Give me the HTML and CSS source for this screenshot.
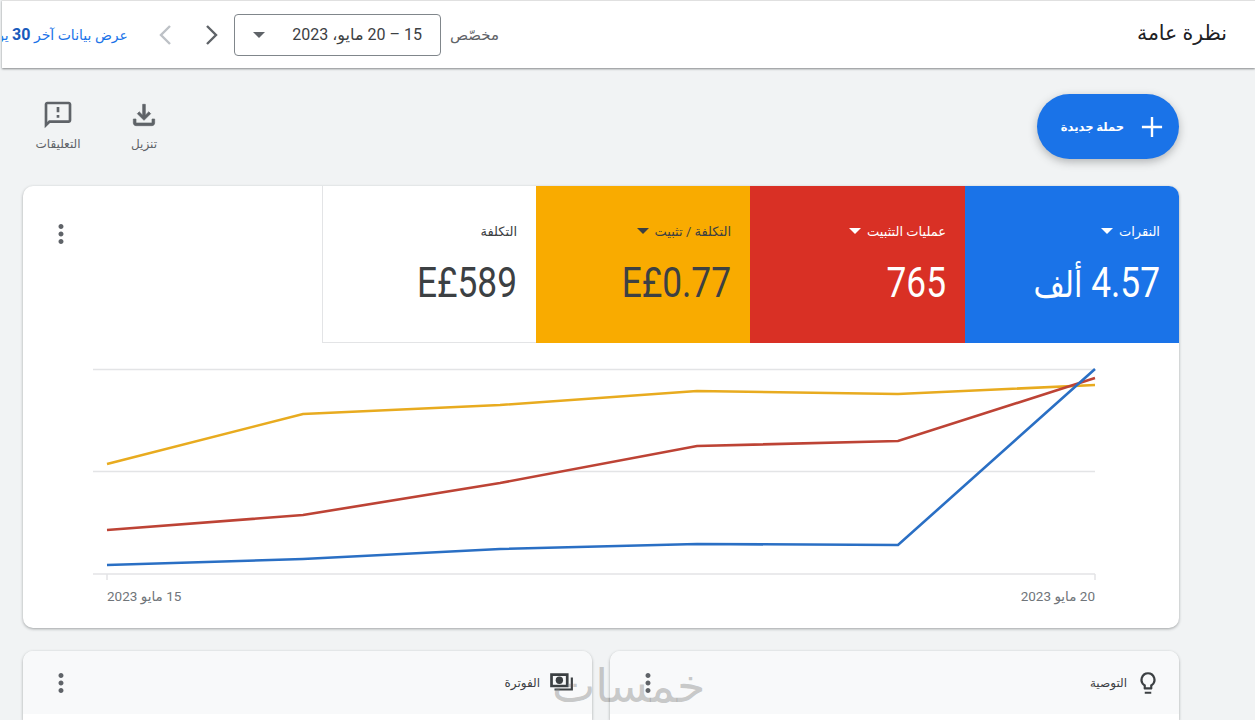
FILE: index.html
```html
<!DOCTYPE html>
<html lang="ar" dir="rtl">
<head>
    <meta charset="UTF-8">
    <title>نظرة عامة</title>
    <link rel="stylesheet" href="styles.css">
</head>
<body>
    <header class="topbar">
        <h1 class="page-title">نظرة عامة</h1>
        <div class="date-controls">
            <span class="range-label">مخصّص</span>
            <div class="range-select">
                <span>15 – 20 مايو، 2023</span>
                <span class="caret caret-dark"></span>
            </div>
            <svg class="chevron" viewBox="0 0 24 24"><path d="M8 3l9 9-9 9" fill="none" stroke="#5f6368" stroke-width="2.4"/></svg>
            <svg class="chevron" viewBox="0 0 24 24"><path d="M16 3l-9 9 9 9" fill="none" stroke="#bdc1c6" stroke-width="2.4"/></svg>
            <a class="range-link" href="#">عرض بيانات آخر <b>30</b> يومًا</a>
        </div>
    </header>

    <main class="content">
        <div class="toolbar">
            <button class="fab">
                <svg class="fab-plus" viewBox="0 0 24 24"><path d="M12 1v22M1 12h22" stroke="#fff" stroke-width="2.6"/></svg>
                <span>حملة جديدة</span>
            </button>
            <div class="actions">
                <div class="action">
                    <svg class="action-icon" viewBox="0 0 24 24"><path fill="#5f6368" stroke="#5f6368" stroke-width=".5" d="M18 15v3H6v-3H4v3c0 1.1.9 2 2 2h12c1.1 0 2-.9 2-2v-3h-2zm-1-4l-1.41-1.41L13 12.17V4h-2v8.17L8.41 9.59 7 11l5 5 5-5z"/></svg>
                    <span>تنزيل</span>
                </div>
                <div class="action">
                    <svg class="action-icon" viewBox="0 0 24 24"><path fill="#5f6368" d="M20 2H4c-1.1 0-1.99.9-1.99 2L2 22l4-4h14c1.1 0 2-.9 2-2V4c0-1.1-.9-2-2-2zm0 14H5.17L4 17.17V4h16v12zM11 12h2v2h-2zm0-6h2v4h-2z"/></svg>
                    <span>التعليقات</span>
                </div>
            </div>
        </div>

        <section class="card overview">
            <div class="metrics">
                <div class="metric metric-blue">
                    <div class="metric-label">النقرات <span class="caret caret-light"></span></div>
                    <div class="metric-value">4.57 <span class="metric-unit">ألف</span></div>
                </div>
                <div class="metric metric-red">
                    <div class="metric-label">عمليات التثبيت <span class="caret caret-light"></span></div>
                    <div class="metric-value">765</div>
                </div>
                <div class="metric metric-yellow">
                    <div class="metric-label">التكلفة / تثبيت <span class="caret caret-dark"></span></div>
                    <div class="metric-value" dir="ltr">E£0.77</div>
                </div>
                <div class="metric metric-plain">
                    <div class="metric-label">التكلفة</div>
                    <div class="metric-value" dir="ltr">E£589</div>
                </div>
                <div class="metric-menu">
                    <svg class="dots" viewBox="0 0 24 24"><path d="M12 8c1.1 0 2-.9 2-2s-.9-2-2-2-2 .9-2 2 .9 2 2 2zm0 2c-1.1 0-2 .9-2 2s.9 2 2 2 2-.9 2-2-.9-2-2-2zm0 6c-1.1 0-2 .9-2 2s.9 2 2 2 2-.9 2-2-.9-2-2-2z"/></svg>
                </div>
            </div>
            <svg class="chart" viewBox="23 343 1156 240">
                <g stroke="#e3e4e6" stroke-width="1.5" fill="none">
                    <path d="M93 369.5H1095M93 471.5H1095M93 574H1095M107 574V580M1095 574V580"/>
                </g>
                <g fill="none" stroke-width="2.6">
                    <polyline stroke="#e8ab1f" points="107,464 303,414 500,405 697,391 898,394 1095,385"/>
                    <polyline stroke="#bd4335" points="107,530 303,515 500,483 697,446 898,441 1095,378"/>
                    <polyline stroke="#2a6fc4" points="107,565 303,559 500,549 697,544 898,545 1095,369"/>
                </g>
            </svg>
            <div class="chart-dates">
                <span dir="rtl">15 مايو 2023</span>
                <span dir="rtl">20 مايو 2023</span>
            </div>
        </section>

        <div class="card-grid">
            <section class="card small-card">
                <div class="small-head">
                    <svg class="small-icon" viewBox="0 0 24 24"><path fill="#3c4043" d="M12 2a7 7 0 0 0-4 12.74V17c0 .55.45 1 1 1h6c.55 0 1-.45 1-1v-2.26A7 7 0 0 0 12 2zm2.85 11.1l-.85.6V16h-4v-2.3l-.85-.6A5 5 0 1 1 14.85 13.1zM9 20h6v2H9z"/></svg>
                    <span>التوصية</span>
                    <svg class="dots small-dots" viewBox="0 0 24 24"><path d="M12 8c1.1 0 2-.9 2-2s-.9-2-2-2-2 .9-2 2 .9 2 2 2zm0 2c-1.1 0-2 .9-2 2s.9 2 2 2 2-.9 2-2-.9-2-2-2zm0 6c-1.1 0-2 .9-2 2s.9 2 2 2 2-.9 2-2-.9-2-2-2z"/></svg>
                </div>
            </section>
            <section class="card small-card">
                <div class="small-head">
                    <svg class="small-icon" viewBox="0 0 24 24"><path fill="#3c4043" fill-rule="evenodd" d="M2 3h17v13H2zm2.5 2.5v8h12v-8zM21 7h2v12H6v-2h15z"/><circle cx="10.5" cy="9.5" r="3.4" fill="#3c4043"/></svg>
                    <span>الفوترة</span>
                    <svg class="dots small-dots" viewBox="0 0 24 24"><path d="M12 8c1.1 0 2-.9 2-2s-.9-2-2-2-2 .9-2 2 .9 2 2 2zm0 2c-1.1 0-2 .9-2 2s.9 2 2 2 2-.9 2-2-.9-2-2-2zm0 6c-1.1 0-2 .9-2 2s.9 2 2 2 2-.9 2-2-.9-2-2-2z"/></svg>
                </div>
            </section>
        </div>
    </main>

    <div class="watermark">خمسات</div>
</body>
</html>
```

FILE: styles.css
```css
html, body {
    height: 720px;
    overflow: hidden;
}

body {
    margin: 0;
    font-family: Roboto, "DejaVu Sans", sans-serif;
    background: #f1f3f4;
    color: #3c4043;
}

.topbar {
    display: flex;
    align-items: center;
    width: 1253px;
    height: 67px;
    background: #fff;
    border-top: 1px solid #e0e0e0;
    box-shadow: 0 1px 2px rgba(60, 64, 67, .6);
    overflow: hidden;
}

.page-title {
    flex: 0 0 756px;
    box-sizing: border-box;
    padding: 0 28px 4px 0;
    margin: 0;
    font-size: 20.5px;
    font-weight: 400;
    color: #202124;
}

.date-controls {
    display: flex;
    align-items: center;
    flex: none;
}

.range-label {
    margin-left: 9px;
    font-size: 15px;
    color: #5f6368;
}

.range-select {
    display: flex;
    align-items: center;
    justify-content: space-between;
    box-sizing: border-box;
    width: 207px;
    height: 42px;
    padding: 0 18px;
    border: 1px solid #80868b;
    border-radius: 4px;
    font-size: 16px;
}

.caret {
    display: inline-block;
    width: 0;
    height: 0;
    border-left: 6px solid transparent;
    border-right: 6px solid transparent;
    border-top: 6px solid #5f6368;
}

.caret-light {
    border-top-color: #fff;
    margin-right: 6px;
}

.metric-yellow .caret-dark {
    border-top-color: #3c4043;
    margin-right: 6px;
}

.chevron {
    width: 24px;
    height: 24px;
    margin-right: 11px;
    margin-left: 10px;
    flex: none;
}

.range-link {
    margin-right: 16px;
    font-size: 14px;
    color: #1a73e8;
    text-decoration: none;
    white-space: nowrap;
}

.range-link b {
    color: #185abc;
    font-size: 16px;
}

.content {
    width: 1156px;
    margin-left: 23px;
    margin-right: 76px;
}

.toolbar {
    display: flex;
    justify-content: space-between;
    align-items: flex-start;
    height: 118px;
}

.fab {
    display: flex;
    align-items: center;
    gap: 17px;
    width: 142px;
    height: 65px;
    margin-top: 26px;
    padding: 0 16px;
    border: none;
    border-radius: 33px;
    background: #1a73e8;
    color: #fff;
    font-family: inherit;
    font-size: 11.5px;
    font-weight: 700;
    box-shadow: 0 3px 8px rgba(60, 64, 67, .35);
}

.fab-plus {
    width: 22px;
    height: 22px;
    flex: none;
}

.actions {
    display: flex;
    gap: 16px;
    margin-top: 31px;
}

.action {
    display: flex;
    flex-direction: column;
    align-items: center;
    width: 70px;
    font-size: 12px;
    color: #5f6368;
}

.action-icon {
    width: 32px;
    height: 32px;
    margin-bottom: 6px;
}

.card {
    background: #fff;
    border-radius: 10px;
    box-shadow: 0 1px 3px rgba(60, 64, 67, .45);
    overflow: hidden;
}

.overview {
    height: 442px;
}

.metrics {
    display: flex;
    height: 157px;
}

.metric {
    box-sizing: border-box;
    width: 214px;
    flex: none;
    padding: 36px 19px 0 0;
}

.metric-red {
    width: 215px;
}

.metric-label {
    display: flex;
    align-items: center;
    height: 18px;
    font-size: 13px;
}

.metric-value {
    margin-top: 20px;
    font-size: 42px;
    line-height: 46px;
    text-align: right;
    white-space: nowrap;
    transform: scaleX(.84);
    transform-origin: right;
}

.metric-unit {
    font-size: 36px;
}

.metric-blue {
    background: #1a73e8;
    color: #fff;
}

.metric-red {
    background: #d93025;
    color: #fff;
}

.metric-yellow {
    background: #f9ab00;
    color: #3c4043;
}

.metric-plain {
    border-left: 1px solid #e3e4e6;
    border-bottom: 1px solid #e3e4e6;
}

.metric-menu {
    flex: 1;
    display: flex;
    justify-content: flex-end;
    padding-top: 33px;
}

.metric-menu .dots {
    margin-left: 23px;
}

.dots {
    width: 30px;
    height: 30px;
    fill: #5f6368;
    flex: none;
}

.chart {
    display: block;
    width: 1156px;
    height: 240px;
}

.chart-dates {
    display: flex;
    direction: ltr;
    justify-content: space-between;
    padding: 5px 84px 0;
    font-size: 13.5px;
    color: #70757a;
}

.card-grid {
    display: grid;
    grid-template-columns: 569px 569px;
    gap: 18px;
    margin-top: 23px;
}

.small-card {
    height: 69px;
    border-radius: 10px 10px 0 0;
}

.small-head {
    display: flex;
    align-items: center;
    height: 63px;
    padding: 0 18px 0 0;
    background: #f8f9fa;
    font-size: 12px;
    color: #3c4043;
}

.small-icon {
    width: 26px;
    height: 26px;
    margin-left: 8px;
    flex: none;
}

.small-dots {
    margin-right: auto;
    margin-left: 23px;
}

.watermark {
    position: absolute;
    left: 552px;
    top: 658px;
    font-size: 46px;
    line-height: 56px;
    color: rgba(140, 140, 140, .45);
    white-space: nowrap;
}
```
